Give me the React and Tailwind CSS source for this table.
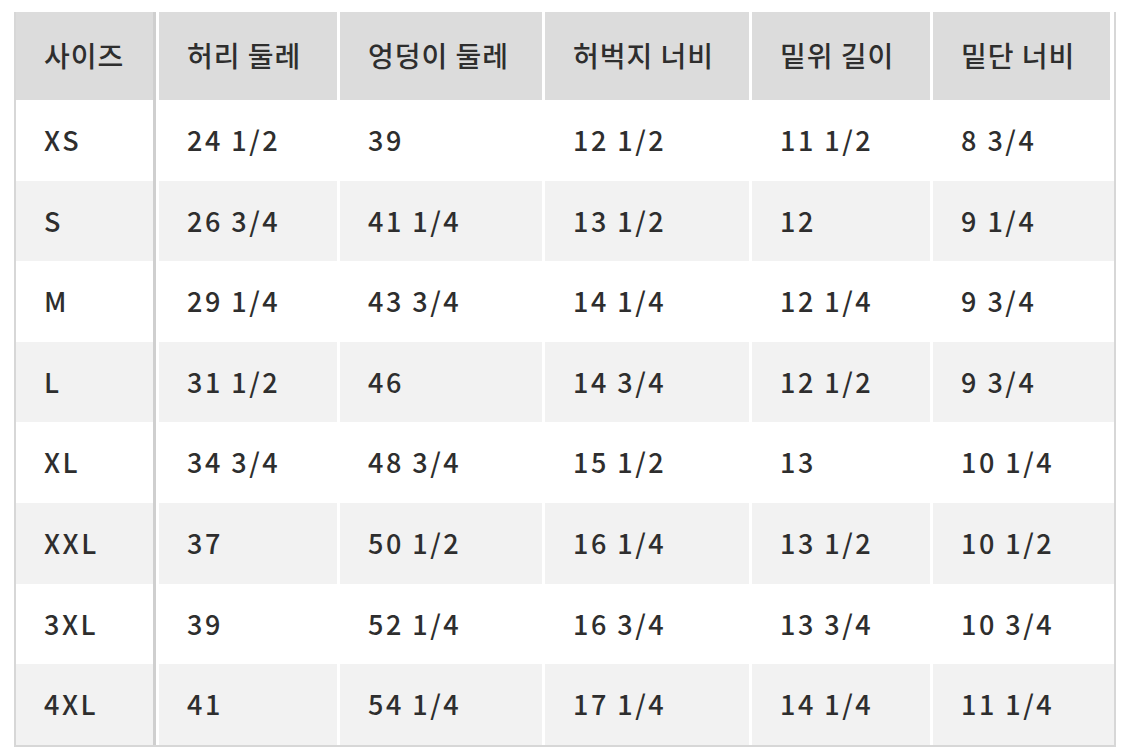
const HEADERS = ["사이즈", "허리 둘레", "엉덩이 둘레", "허벅지 너비", "밑위 길이", "밑단 너비"];

const ROWS = [
  ["XS", "24 1/2", "39", "12 1/2", "11 1/2", "8 3/4"],
  ["S", "26 3/4", "41 1/4", "13 1/2", "12", "9 1/4"],
  ["M", "29 1/4", "43 3/4", "14 1/4", "12 1/4", "9 3/4"],
  ["L", "31 1/2", "46", "14 3/4", "12 1/2", "9 3/4"],
  ["XL", "34 3/4", "48 3/4", "15 1/2", "13", "10 1/4"],
  ["XXL", "37", "50 1/2", "16 1/4", "13 1/2", "10 1/2"],
  ["3XL", "39", "52 1/4", "16 3/4", "13 3/4", "10 3/4"],
  ["4XL", "41", "54 1/4", "17 1/4", "14 1/4", "11 1/4"],
];

const GRID = "grid grid-cols-[140px_178px_202px_204px_178px_1fr] gap-x-[3px]";

export default function App() {
  return (
    <div className="min-h-screen bg-white pt-[12px] pl-[14px] text-[#2e2e2e]" style={{ fontFamily: '"Noto Sans CJK KR", "Noto Sans", sans-serif' }}>
      <div className="w-[1102px] border-x-2 border-b-2 border-[#d7d7d7]">
        <div className={`${GRID} h-[88px]`}>
          {HEADERS.map((h, i) => (
            <div
              key={h}
              className={`flex items-center pl-[28px] pb-[2px] bg-[#dcdcdc] text-[28px] font-medium tracking-[1px] ${i === 0 ? "border-r-[3px] border-[#cfcfcf]" : ""} ${i === 5 ? "mr-[4px]" : ""}`}
            >
              {h}
            </div>
          ))}
        </div>
        {ROWS.map((row, r) => (
          <div key={row[0]} className={`${GRID} h-[80.6px]`}>
            {row.map((v, i) => (
              <div
                key={i}
                className={`flex items-center pl-[28px] text-[27px] font-medium tracking-[2.5px] ${r % 2 ? "bg-[#f2f2f2]" : "bg-white"} ${i === 0 ? "border-r-[3px] border-[#cfcfcf]" : ""}`}
              >
                {v}
              </div>
            ))}
          </div>
        ))}
      </div>
    </div>
  );
}
